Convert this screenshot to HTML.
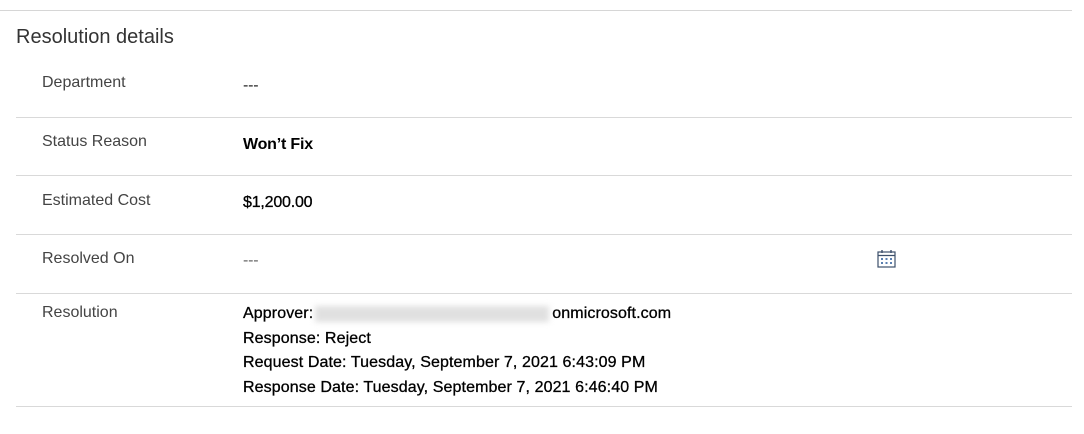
<!DOCTYPE html>
<html><head><style>
body{margin:0;width:1084px;height:434px;background:#fff;font-family:"Liberation Sans",sans-serif;position:relative;overflow:hidden}
.top{position:absolute;left:0;right:12px;top:10px;border-top:1px solid #d6d6d6}
.title{position:absolute;left:16px;top:26px;font-size:20px;color:#333}
.hr{position:absolute;left:16px;width:1056px;border-top:1px solid #d9d9d9}
.lab{position:absolute;left:42px;font-size:16px;color:#444}
.val{position:absolute;left:243px;font-size:16px;color:#000;font-weight:bold;letter-spacing:-0.2px}
.res{position:absolute;left:243px;top:302px;font-size:16px;line-height:24.5px;color:#000;letter-spacing:0.1px;-webkit-text-stroke:0.3px #000}
.blur{display:inline-block;width:234px;height:16px;background:#e0e0e0;filter:blur(3px);vertical-align:middle;margin:0 3px 0 2px}
</style></head><body>
<div class="top"></div>
<div class="title">Resolution details</div>
<div class="lab" style="top:74px">Department</div>
<div class="val" style="top:77px;font-weight:normal;color:#222">---</div>
<div class="hr" style="top:117px"></div>
<div class="lab" style="top:133px">Status Reason</div>
<div class="val" style="top:136px">Won’t Fix</div>
<div class="hr" style="top:175px"></div>
<div class="lab" style="top:192px">Estimated Cost</div>
<div class="val" style="top:194px;font-weight:normal;-webkit-text-stroke:0.3px #000">$1,200.00</div>
<div class="hr" style="top:234px"></div>
<div class="lab" style="top:250px">Resolved On</div>
<div class="val" style="top:252px;font-weight:normal;color:#666">---</div>
<svg style="position:absolute;left:877px;top:250px" width="19" height="18" viewBox="0 0 19 18">
<rect x="1" y="2" width="17" height="15" fill="none" stroke="#3d4f6b" stroke-width="1.2"/>
<line x1="1" y1="5.5" x2="18" y2="5.5" stroke="#3d4f6b" stroke-width="1.2"/>
<line x1="5" y1="0" x2="5" y2="3" stroke="#3d4f6b" stroke-width="1.4"/>
<line x1="14" y1="0" x2="14" y2="3" stroke="#3d4f6b" stroke-width="1.4"/>
<g fill="#5a7fb0"><rect x="4" y="8" width="2" height="2"/><rect x="8.5" y="8" width="2" height="2"/><rect x="13" y="8" width="2" height="2"/><rect x="4" y="12" width="2" height="2"/><rect x="8.5" y="12" width="2" height="2"/><rect x="13" y="12" width="2" height="2"/></g>
</svg>
<div class="hr" style="top:293px"></div>
<div class="lab" style="top:304px">Resolution</div>
<div class="res">Approver:<span class="blur"></span>onmicrosoft.com<br>Response: Reject<br>Request Date: Tuesday, September 7, 2021 6:43:09 PM<br>Response Date: Tuesday, September 7, 2021 6:46:40 PM</div>
<div class="hr" style="top:406px"></div>
</body></html>
